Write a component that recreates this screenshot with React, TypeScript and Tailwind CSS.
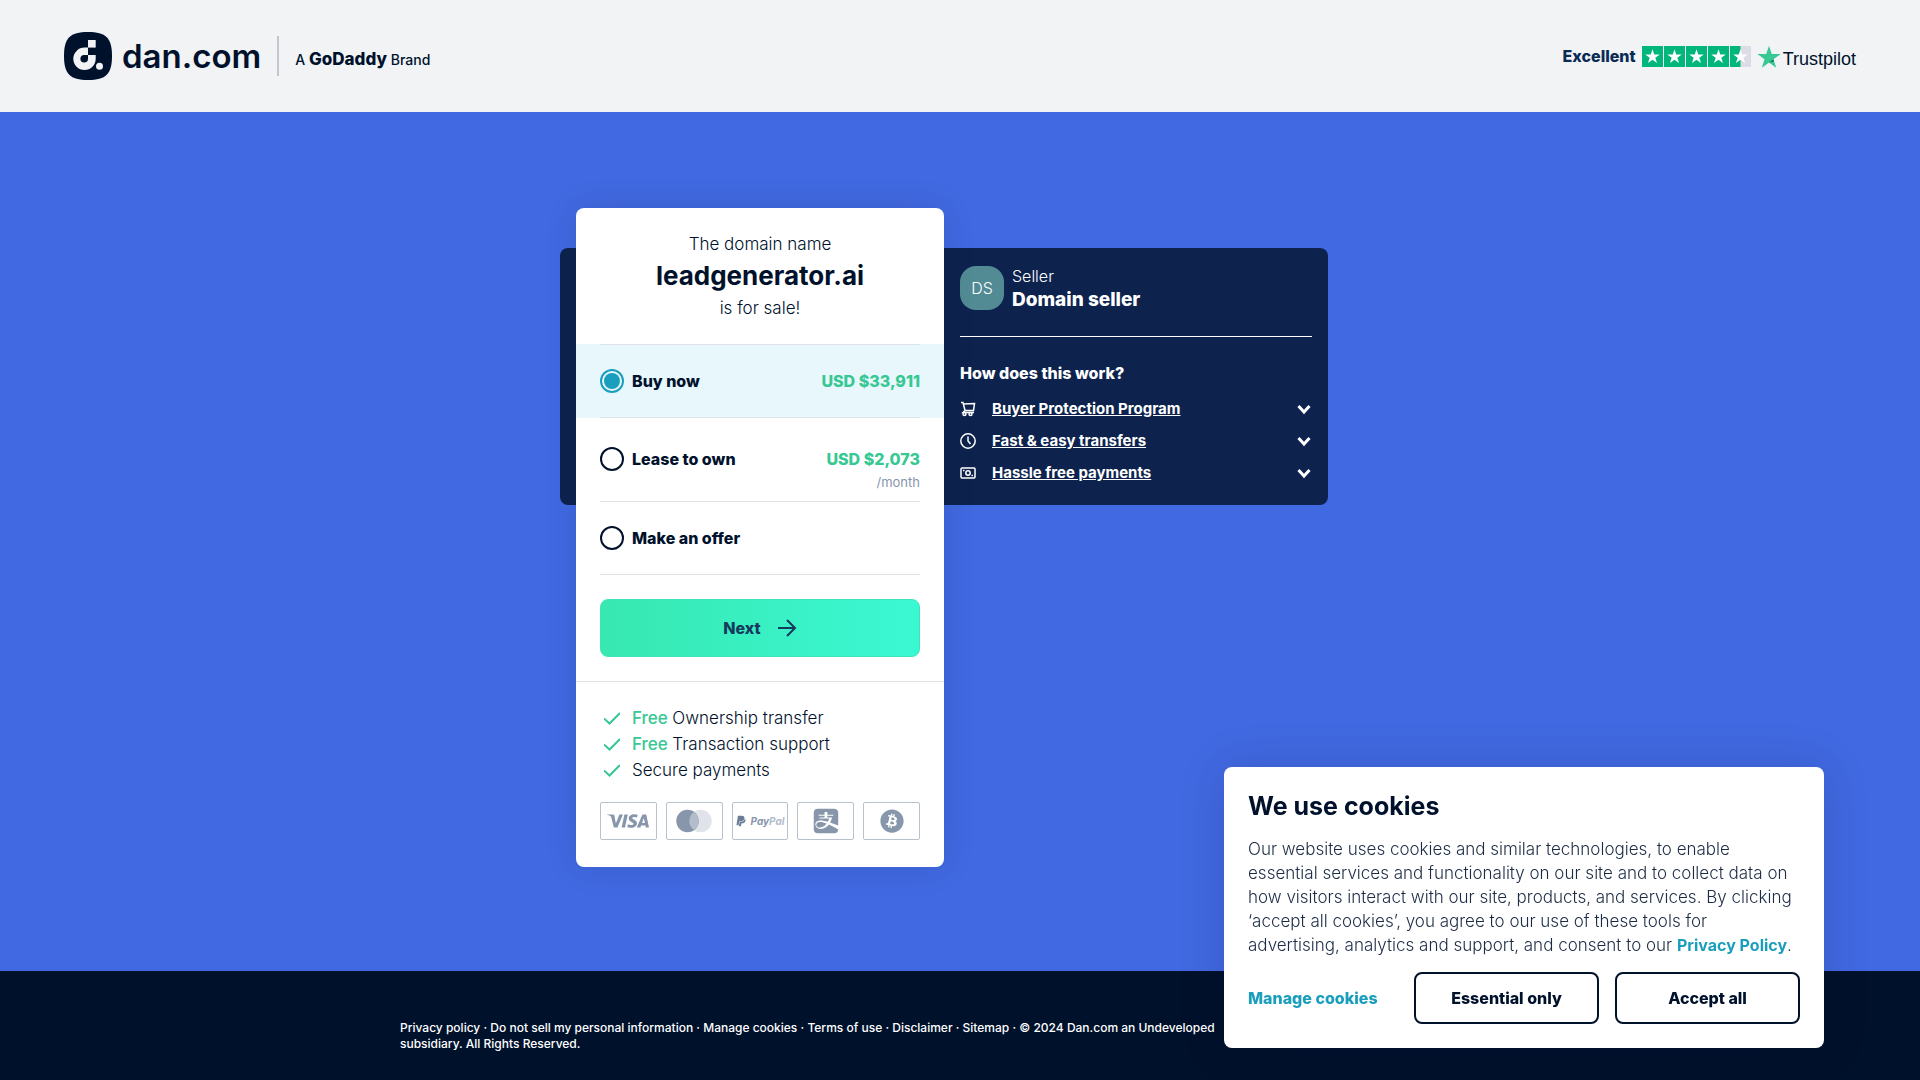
import { useState } from "react";
import type { ReactNode } from "react";
import { FaAlipay, FaBitcoin, FaPaypal } from "react-icons/fa";
import { SiVisa } from "react-icons/si";

/* ========= Types ========= */
type Option = {
  id: string;
  label: string;
  price?: string;
  period?: string;
};

/* ========= Data ========= */
const options: Option[] = [
  { id: "buy", label: "Buy now", price: "USD $33,911" },
  { id: "lease", label: "Lease to own", price: "USD $2,073", period: "/month" },
  { id: "offer", label: "Make an offer" },
];

const benefits = [
  { free: true, text: "Ownership transfer" },
  { free: true, text: "Transaction support" },
  { free: false, text: "Secure payments" },
];

const footerLinks = [
  "Privacy policy",
  "Do not sell my personal information",
  "Manage cookies",
  "Terms of use",
  "Disclaimer",
  "Sitemap",
];

const STAR = "M12 2.5l2.3 7h7.4l-6 4.3 2.3 7-6-4.3-6 4.3 2.3-7-6-4.3h7.4z";

/* ========= Page ========= */
export default function App() {
  return (
    <div className="flex min-h-screen flex-col bg-[#4169e1] font-['Inter',sans-serif] text-[#00112c]">
      <Header />
      <main className="mx-auto w-full max-w-[1120px] grow pt-24 pb-[104px] pl-40">
        <div className="grid w-full max-w-[768px] grid-cols-[16px_368px_1fr] grid-rows-[40px_auto_1fr]">
          <SellerPanel />
          <OfferCard />
        </div>
      </main>
      <footer className="bg-[#00112c] pt-[49px] pb-7 text-white">
        <div className="mx-auto w-full max-w-[1120px]">
          <p className="max-w-[930px] text-xs leading-4 font-medium">
            {footerLinks.map((l) => (
              <span key={l}>
                <a href="#">{l}</a> ·{" "}
              </span>
            ))}
            © 2024 Dan.com an Undeveloped
            <br />
            subsidiary. All Rights Reserved.
          </p>
        </div>
      </footer>
      <CookieBanner />
    </div>
  );
}

/* -------- Header -------- */
function Header() {
  return (
    <header className="flex h-28 items-center justify-between bg-[#f1f3f5] px-16">
      <a href="#" className="flex items-center">
        <svg viewBox="0 0 48 48" className="size-12">
          <path
            fill="#00112c"
            d="M24 0C42 0 48 6 48 24S42 48 24 48 0 42 0 24 6 0 24 0z"
          />
          <path fill="#f1f3f5" d="M24 8h7.700v7.600H24z" />
          <path
            fill="#f1f3f5"
            d="M24 15.600V23h7.700v3.800a11.200 11.200 0 1 1-11.200-11.200z"
          />
          <path fill="#00112c" d="M24 23v3.800a3.800 3.800 0 1 1-3.800-3.800z" />
          <circle cx="35.500" cy="34.200" r="3.500" fill="#f1f3f5" />
        </svg>
        <span className="ml-[10px] text-[33px] leading-10 font-semibold">dan.com</span>
        <span className="ml-4 h-10 w-[2px] bg-[#c3c7d1]" />
        <span className="ml-4 pt-[6px] text-sm font-medium">
          A <b className="text-[17px] font-extrabold">GoDaddy</b> Brand
        </span>
      </a>
      <a href="#" className="flex items-center">
        <span className="text-base font-extrabold text-[#0a2a55]">Excellent</span>
        <span className="ml-[6px] flex gap-px">
          {[1, 2, 3, 4, 5].map((n) => (
            <svg key={n} viewBox="0 0 24 24" className="size-[21px]">
              <path fill="#dcdce6" d="M0 0h24v24H0z" />
              <path fill="#00b67a" d={n < 5 ? "M0 0h24v24H0z" : "M0 0h12v24H0z"} />
              <path fill="#fff" d="M12 3.800l2 6h6.300l-5.100 3.700 2 6-5.200-3.700-5.200 3.700 2-6-5.100-3.700H10z" />
            </svg>
          ))}
        </span>
        <svg viewBox="2 2 20 19" className="ml-[6px] h-[23px] w-6">
          <path fill="#37c893" d={STAR} />
          <path fill="#127a58" d="M16.300 15.600l-.6-1.800L12 16.500z" />
        </svg>
        <span className="ml-[2px] pt-[6px] font-['Liberation_Sans',sans-serif] text-lg leading-5">
          Trustpilot
        </span>
      </a>
    </header>
  );
}

/* -------- Offer card -------- */
function OfferCard() {
  const [selected, setSelected] = useState("buy");

  return (
    <section className="z-10 col-start-2 row-span-3 row-start-1 rounded-lg bg-white shadow-[0_0_32px_rgba(0,17,44,0.12)]">
      <div className="px-6 py-6 text-center">
        <p className="text-[17px] leading-6 font-light">The domain name</p>
        <h1 className="text-[26px] leading-10 font-bold">leadgenerator.ai</h1>
        <p className="text-[17px] leading-6 font-light">is for sale!</p>
      </div>

      <div>
        {options.map((o) => (
          <label
            key={o.id}
            className={`block cursor-pointer px-6 ${selected === o.id ? "bg-[#e7f7fc]" : ""}`}
          >
            <span
              className={`flex items-start justify-between border-b border-[#dfe2e6] ${
                o.id === "buy" ? "border-t py-6" : o.period ? "pt-[29px] pb-2" : "py-6"
              }`}
            >
              <span className="flex items-center gap-2 font-extrabold">
                <input
                  type="radio"
                  name="option"
                  checked={selected === o.id}
                  onChange={() => setSelected(o.id)}
                  className="size-6 appearance-none rounded-full border-2 border-[#00112c] checked:border-[#1a9ebd] checked:bg-[#1a9ebd] checked:bg-clip-content checked:p-[2px]"
                />
                {o.label}
              </span>
              <span className="text-right">
                <span className="block leading-6 font-extrabold text-[#37c893]">{o.price}</span>
                {o.period && (
                  <span className="block text-[13px] leading-[22px] text-[#8896ab]">{o.period}</span>
                )}
              </span>
            </span>
          </label>
        ))}
      </div>

      <div className="border-b border-[#dfe2e6] p-6">
        <button className="flex h-[58px] w-full items-center justify-center gap-4 rounded-lg border border-[#3de6b8] bg-linear-to-r from-[#37e8b0] to-[#3bf8d4] font-extrabold text-[#153a5e]">
          Next
          <svg viewBox="0 0 20 20" fill="none" stroke="currentColor" strokeWidth="2" className="size-5">
            <path d="M1 10h17M10 2l8 8-8 8" />
          </svg>
        </button>
      </div>

      <div className="px-6 pt-[23px] pb-[27px]">
        <ul>
          {benefits.map((b) => (
            <li key={b.text} className="flex items-center gap-3 pl-1 text-[17px] leading-[26px] font-light">
              <svg viewBox="0 0 16 13" fill="none" stroke="#37c893" strokeWidth="2" className="h-[13px] w-4">
                <path d="M0 6.500l5.500 5L16 1" />
              </svg>
              <span>
                {b.free && <span className="font-medium text-[#37c893]">Free </span>}
                {b.text}
              </span>
            </li>
          ))}
        </ul>
        <div className="mt-[19px] grid grid-cols-5 gap-[9px] text-[#8896ab]">
          <Payment>
            <SiVisa className="size-[42px]" />
          </Payment>
          <Payment>
            <svg viewBox="0 0 36 24" className="h-6 w-9">
              <circle cx="24.500" cy="12" r="11.200" fill="#e0e4ea" />
              <circle cx="11.500" cy="12" r="11.200" fill="#8896ab" />
              <path fill="#b3bcca" d="M18 2.900a11.200 11.200 0 0 1 0 18.200a11.200 11.200 0 0 1 0-18.200z" />
            </svg>
          </Payment>
          <Payment>
            <FaPaypal className="size-3 text-[#6b7c95]" />
            <span className="ml-[3px] text-[10px] font-bold italic">
              Pay<span className="text-[#b3bcca]">Pal</span>
            </span>
          </Payment>
          <Payment>
            <FaAlipay className="size-7" />
          </Payment>
          <Payment>
            <FaBitcoin className="size-6" />
          </Payment>
        </div>
      </div>
    </section>
  );
}

function Payment({ children }: { children: ReactNode }) {
  return (
    <div className="flex h-[38px] items-center justify-center rounded-xs border border-[#b8c1ce]">
      {children}
    </div>
  );
}

/* -------- Seller panel -------- */
function SellerPanel() {
  return (
    <section className="col-span-3 col-start-1 row-start-2 rounded-lg bg-[#0d234e] pt-[18px] pr-4 pb-4 pl-[400px] text-white">
      <div className="flex items-start gap-2 border-b border-white pb-[22px]">
        <div className="flex size-11 items-center justify-center rounded-2xl bg-[#528b94] font-light">
          DS
        </div>
        <div>
          <p className="leading-5 font-light">Seller</p>
          <p className="text-[19px] leading-7 font-extrabold">Domain seller</p>
        </div>
      </div>
      <h2 className="mt-6 mb-2 leading-6 font-extrabold">How does this work?</h2>
      <Faq label="Buyer Protection Program">
        <path d="M1 1.500h2l2 8h8.500l1-7L3.500 3M5 9.500L3 11.500h11" />
        <circle cx="4.500" cy="13" r="1.500" />
        <circle cx="10.500" cy="13" r="1.500" />
      </Faq>
      <Faq label="Fast & easy transfers">
        <circle cx="8" cy="8" r="7.200" />
        <path d="M8 3.500V8l2.500 3" />
      </Faq>
      <Faq label="Hassle free payments">
        <rect x="1" y="3" width="14" height="10" rx="1" />
        <circle cx="8" cy="8" r="2.200" />
        <path d="M3 5.500h1.500M11.500 10.500H13" />
      </Faq>
    </section>
  );
}

function Faq({ label, children }: { label: string; children: ReactNode }) {
  return (
    <button className="flex h-8 w-full items-center gap-4 text-[15px] font-bold">
      <svg viewBox="0 0 16 16" fill="none" stroke="currentColor" strokeWidth="1.500" className="size-4">
        {children}
      </svg>
      <span className="grow text-left underline">{label}</span>
      <svg viewBox="0 0 16 12" fill="none" stroke="currentColor" strokeWidth="3" className="h-3 w-4">
        <path d="M2.500 3L8 9l5.500-6" />
      </svg>
    </button>
  );
}

/* -------- Cookie banner -------- */
function CookieBanner() {
  return (
    <aside className="fixed right-24 bottom-8 z-20 w-[600px] rounded-lg bg-white p-6 shadow-[0_0_48px_rgba(0,17,44,0.14)]">
      <h2 className="text-[25px] leading-[30px] font-bold">We use cookies</h2>
      <p className="mt-4 mb-[15px] text-[17px] leading-6 font-light text-[#1c2b45]">
        Our website uses cookies and similar technologies, to enable essential services and
        functionality on our site and to collect data on how visitors interact with our site,
        products, and services. By clicking ‘accept all cookies’, you agree to our use of these
        tools for advertising, analytics and support, and consent to our{" "}
        <a href="#" className="text-base font-bold text-[#1a9ebd]">
          Privacy Policy
        </a>
        .
      </p>
      <div className="flex items-center gap-4 font-extrabold">
        <button className="grow text-left text-[#1a9ebd]">Manage cookies</button>
        <button className="h-[52px] w-[185px] rounded-lg border-2 border-[#00112c]">
          Essential only
        </button>
        <button className="h-[52px] w-[185px] rounded-lg border-2 border-[#00112c]">
          Accept all
        </button>
      </div>
    </aside>
  );
}
